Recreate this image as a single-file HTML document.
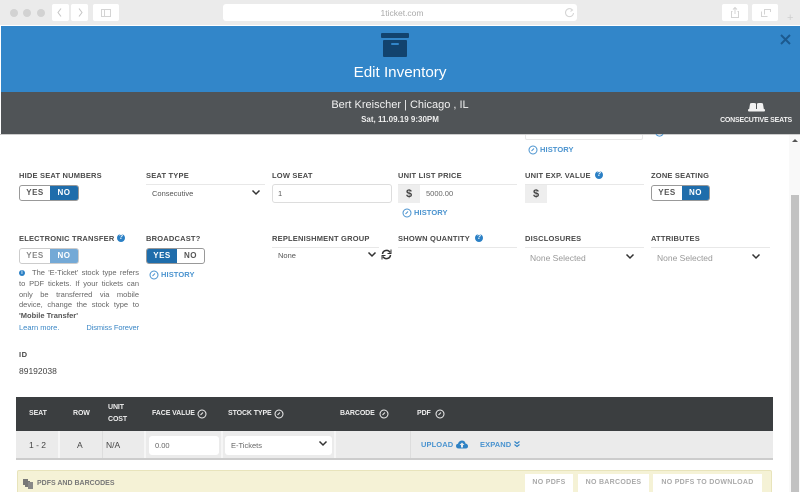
<!DOCTYPE html>
<html><head><meta charset="utf-8">
<style>
html,body{margin:0;padding:0;background:#fff;}
#p{position:relative;width:800px;height:492px;overflow:hidden;background:#fff;font-family:"Liberation Sans",sans-serif;color:#444;}
#p div,#p svg{position:absolute;}
.t{white-space:nowrap;}
.lb{font-size:7.5px;font-weight:bold;letter-spacing:.2px;color:#4a4a4a;white-space:nowrap;line-height:10px;}
.ln{height:1px;background:#e8e8e8;}
.bt{background:#fff;border-radius:2px;}
.q{width:8px;height:8px;border-radius:50%;background:#2b80c5;color:#fff;font-size:7px;font-weight:bold;line-height:8px;text-align:center;}
.tog{height:16px;border:1px solid #999;border-radius:3px;box-sizing:border-box;background:#fff;overflow:hidden;font-size:8px;font-weight:bold;letter-spacing:.5px;line-height:14px;text-align:center;color:#555;}
.tog .on{background:#1f6dab;color:#fff;top:0;height:14px;}
.tog .off{top:0;height:14px;}
.h{font-size:7.5px;font-weight:bold;letter-spacing:.1px;color:#4a93cf;white-space:nowrap;line-height:10px;}
.th{font-size:7px;font-weight:bold;letter-spacing:-.1px;color:#eee;white-space:nowrap;line-height:11px;}
.sel{font-size:7.5px;color:#555;white-space:nowrap;line-height:10px;}
.g{font-size:8.5px;color:#999;white-space:nowrap;line-height:10px;}
.np{background:#fff;font-size:7px;font-weight:bold;letter-spacing:.3px;color:#aaa;text-align:center;line-height:17px;white-space:nowrap;}
.j{left:19px;width:120px;font-size:7.5px;line-height:10.8px;color:#666;text-align:justify;text-align-last:justify;white-space:normal;}
</style></head><body>
<div id="p">
<!-- browser bar -->
<div style="left:0;top:0;width:800px;height:25px;background:#ebebeb"></div>
<div style="left:0;top:25px;width:800px;height:1px;background:#fff"></div>
<div style="left:10px;top:9px;width:8px;height:8px;border-radius:50%;background:#d2d2d2"></div>
<div style="left:23px;top:9px;width:8px;height:8px;border-radius:50%;background:#d2d2d2"></div>
<div style="left:37px;top:9px;width:8px;height:8px;border-radius:50%;background:#d2d2d2"></div>
<div class="bt" style="left:52px;top:4px;width:17px;height:17px"></div>
<div class="bt" style="left:71px;top:4px;width:17px;height:17px"></div>
<svg style="left:52px;top:4px" width="36" height="17" fill="none" stroke="#c4c4c4" stroke-width="1"><path d="M9 4.5L6 8.5L9 12.5M27 4.5L30 8.5L27 12.5"/></svg>
<div class="bt" style="left:93px;top:4px;width:26px;height:17px"></div>
<svg style="left:93px;top:4px" width="26" height="17" fill="none" stroke="#d4d4d4" stroke-width="1"><path d="M8.500 5.500H17.500V12.500H8.500ZM11.500 5.500V12.500"/></svg>
<div class="bt" style="left:223px;top:4px;width:354px;height:17px;border-radius:3px"></div>
<div class="t" style="left:380px;top:8px;width:44px;text-align:center;font-size:8.500px;line-height:10px;color:#aaa">1ticket.com</div>
<svg style="left:563px;top:6px" width="13" height="13" fill="none" stroke="#d4d4d4" stroke-width="1"><path d="M9.500 4A4 4 0 1 0 10.500 7M7 2.500L9.500 4L7.500 5.500"/></svg>
<div class="bt" style="left:722px;top:4px;width:26px;height:17px"></div>
<div class="bt" style="left:752px;top:4px;width:26px;height:17px"></div>
<svg style="left:722px;top:4px" width="56" height="17" fill="none" stroke="#d4d4d4" stroke-width="1"><path d="M10.500 7.500H9.500V13.500H16.500V7.500H15.500M13 10V3.500M11 5.500L13 3.500L15 5.500"/><path d="M39.500 7.500V12.500H45.500M42.500 10.500V5.500H48.500V8"/></svg>
<div class="t" style="left:787px;top:12px;font-size:11px;line-height:12px;color:#d0d0d0">+</div>
<!-- blue header -->
<div style="left:1px;top:26px;width:799px;height:66px;background:#3286c9"></div>
<svg style="left:380px;top:33px" width="30" height="25"><rect x="1" y="0" width="28" height="5" rx="1" fill="#12436e"/><rect x="3" y="7" width="24" height="17" rx="1" fill="#12436e"/><rect x="11" y="10" width="8" height="2" rx="1" fill="#3286c9"/></svg>
<div class="t" style="left:300px;top:64px;width:200px;text-align:center;font-size:15.200px;line-height:18px;color:#fff">Edit Inventory</div>
<svg style="left:779px;top:33px" width="13" height="13" stroke="#1c5a8f" stroke-width="2" fill="none"><path d="M2 2L11 11M11 2L2 11"/></svg>
<!-- dark band -->
<div style="left:1px;top:92px;width:799px;height:42px;background:#505457"></div>
<div style="left:0;top:134px;width:800px;height:1px;background:#ccc"></div>
<div class="t" style="left:300px;top:98px;width:200px;text-align:center;font-size:11px;line-height:14px;color:#f2f2f2">Bert Kreischer | Chicago , IL</div>
<div class="t" style="left:300px;top:115px;width:200px;text-align:center;font-size:8px;font-weight:bold;line-height:10px;color:#eee">Sat, 11.09.19 9:30PM</div>
<svg style="left:748px;top:102px" width="17" height="10" fill="#f2f2f2"><path d="M1 8L2 2Q2 1 4 1H6Q8 1 8 2V8Z"/><path d="M9 8V2Q9 1 11 1H13Q15 1 15 2L16 8Z"/><rect x="0" y="7" width="17" height="2.500" rx="1"/></svg>
<div class="t" style="left:700px;top:116px;width:92px;text-align:right;font-size:7px;font-weight:bold;letter-spacing:-.2px;line-height:9px;color:#f2f2f2">CONSECUTIVE SEATS</div>
<!-- scrollbar -->
<div style="left:789px;top:135px;width:11px;height:357px;background:#f9f9f9"></div>
<div style="left:791px;top:195px;width:8px;height:297px;background:#c2c2c2"></div>
<svg style="left:791px;top:138px" width="8" height="6"><path d="M1 4L4 1L7 4Z" fill="#555"/></svg>
<!-- cut off row -->
<div style="left:525px;top:135px;width:118px;height:5px;border:1px solid #e8e8e8;border-top:0;border-radius:0 0 2px 2px;box-sizing:border-box"></div>
<svg style="left:655px;top:134px" width="10" height="4" fill="none" stroke="#4a93cf" stroke-width="1"><path d="M1 0A4 4 0 0 0 8 0"/></svg>
<svg style="left:528px;top:145px" width="10" height="10" fill="none" stroke="#4a93cf" stroke-width="1"><circle cx="5" cy="5" r="4"/><path d="M3.500 6L6 3.500"/></svg>
<div class="h" style="left:540px;top:145px">HISTORY</div>
<!-- row 1 -->
<div class="lb" style="left:19px;top:171px">HIDE SEAT NUMBERS</div>
<div class="tog" style="left:19px;top:185px;width:60px"><div class="off" style="left:0;width:30px">YES</div><div class="on" style="left:30px;width:28px">NO</div></div>
<div class="lb" style="left:146px;top:171px">SEAT TYPE</div>
<div class="ln" style="left:146px;top:184px;width:119px"></div>
<div class="sel" style="left:152px;top:189px">Consecutive</div>
<svg style="left:251px;top:189px" width="10" height="8" fill="none" stroke="#333" stroke-width="1.500"><path d="M1.500 1.500L5 5L8.500 1.500"/></svg>
<div class="lb" style="left:272px;top:171px">LOW SEAT</div>
<div style="left:272px;top:184px;width:120px;height:19px;border:1px solid #ddd;border-radius:3px;box-sizing:border-box"></div>
<div class="sel" style="left:278px;top:189px">1</div>
<div class="lb" style="left:398px;top:171px">UNIT LIST PRICE</div>
<div class="ln" style="left:398px;top:184px;width:119px"></div>
<div style="left:398px;top:185px;width:22px;height:18px;background:#eee"></div>
<div class="t" style="left:398px;top:187px;width:22px;text-align:center;font-size:11px;font-weight:bold;line-height:14px;color:#444">$</div>
<div class="sel" style="left:426px;top:189px;color:#666">5000.00</div>
<svg style="left:402px;top:208px" width="10" height="10" fill="none" stroke="#4a93cf" stroke-width="1"><circle cx="5" cy="5" r="4"/><path d="M3.500 6L6 3.500"/></svg>
<div class="h" style="left:414px;top:208px">HISTORY</div>
<div class="lb" style="left:525px;top:171px">UNIT EXP. VALUE</div>
<div class="q" style="left:595px;top:171px">?</div>
<div class="ln" style="left:525px;top:184px;width:119px"></div>
<div style="left:525px;top:185px;width:22px;height:18px;background:#eee"></div>
<div class="t" style="left:525px;top:187px;width:22px;text-align:center;font-size:11px;font-weight:bold;line-height:14px;color:#444">$</div>
<div class="lb" style="left:651px;top:171px">ZONE SEATING</div>
<div class="tog" style="left:651px;top:185px;width:59px"><div class="off" style="left:0;width:30px">YES</div><div class="on" style="left:30px;width:27px">NO</div></div>
<!-- row 2 -->
<div class="lb" style="left:19px;top:234px">ELECTRONIC TRANSFER</div>
<div class="q" style="left:117px;top:234px">?</div>
<div class="tog" style="left:19px;top:248px;width:60px;border-color:#ccc;color:#888"><div class="off" style="left:0;width:30px">YES</div><div class="on" style="left:30px;width:28px;background:#74a9d6">NO</div></div>
<div class="q" style="left:19px;top:270px;width:6px;height:6px;font-size:5px;line-height:6px">i</div>
<div class="j" style="top:268px;left:32px;width:107px">The 'E-Ticket' stock type refers</div>
<div class="j" style="top:279px">to PDF tickets. If your tickets can</div>
<div class="j" style="top:290px">only be transferred via mobile</div>
<div class="j" style="top:300px">device, change the stock type to</div>
<div class="t" style="left:19px;top:311px;font-size:7.500px;line-height:10.800px;font-weight:bold;color:#555">'Mobile Transfer'</div>
<div class="t" style="left:19px;top:323px;font-size:7.500px;line-height:10px;color:#3b87c6">Learn more.</div>
<div class="t" style="left:79px;top:323px;width:60px;text-align:right;font-size:7.500px;letter-spacing:-.1px;line-height:10px;color:#3b87c6">Dismiss Forever</div>
<div class="lb" style="left:146px;top:234px">BROADCAST?</div>
<div class="tog" style="left:146px;top:248px;width:59px"><div class="on" style="left:0;width:30px">YES</div><div class="off" style="left:30px;width:27px">NO</div></div>
<svg style="left:149px;top:270px" width="10" height="10" fill="none" stroke="#4a93cf" stroke-width="1"><circle cx="5" cy="5" r="4"/><path d="M3.500 6L6 3.500"/></svg>
<div class="h" style="left:161px;top:270px">HISTORY</div>
<div class="lb" style="left:272px;top:234px">REPLENISHMENT GROUP</div>
<div class="ln" style="left:272px;top:247px;width:107px"></div>
<div class="sel" style="left:278px;top:251px">None</div>
<svg style="left:367px;top:251px" width="10" height="8" fill="none" stroke="#333" stroke-width="1.500"><path d="M1.500 1.500L5 5L8.500 1.500"/></svg>
<svg style="left:381px;top:249px" width="11" height="11" fill="none" stroke="#333" stroke-width="1.500"><path d="M1.500 5A4 4 0 0 1 9 3.500M9.500 6A4 4 0 0 1 2 7.500"/><path d="M10 0.500V4.500H6.500M1 10.500V6.500H4.500" stroke-width="1"/></svg>
<div class="lb" style="left:398px;top:234px">SHOWN QUANTITY</div>
<div class="q" style="left:475px;top:234px">?</div>
<div class="ln" style="left:398px;top:247px;width:119px"></div>
<div class="lb" style="left:525px;top:234px">DISCLOSURES</div>
<div class="ln" style="left:525px;top:247px;width:119px"></div>
<div class="g" style="left:530px;top:253px">None Selected</div>
<svg style="left:625px;top:253px" width="10" height="8" fill="none" stroke="#333" stroke-width="1.500"><path d="M1.500 1.500L5 5L8.500 1.500"/></svg>
<div class="lb" style="left:651px;top:234px">ATTRIBUTES</div>
<div class="ln" style="left:651px;top:247px;width:119px"></div>
<div class="g" style="left:657px;top:253px">None Selected</div>
<svg style="left:751px;top:253px" width="10" height="8" fill="none" stroke="#333" stroke-width="1.500"><path d="M1.500 1.500L5 5L8.500 1.500"/></svg>
<!-- ID -->
<div class="lb" style="left:19px;top:350px;letter-spacing:.5px">ID</div>
<div class="t" style="left:19px;top:366px;font-size:8.500px;line-height:11px;color:#444">89192038</div>
<!-- table -->
<div style="left:16px;top:397px;width:757px;height:34px;background:#3b3e40"></div>
<div class="th" style="left:29px;top:408px">SEAT</div>
<div class="th" style="left:73px;top:408px">ROW</div>
<div class="th" style="left:108px;top:402px;line-height:12px">UNIT<br>COST</div>
<div class="th" style="left:152px;top:408px">FACE VALUE</div>
<div class="th" style="left:228px;top:408px">STOCK TYPE</div>
<div class="th" style="left:340px;top:408px">BARCODE</div>
<div class="th" style="left:417px;top:408px">PDF</div>
<svg style="left:197px;top:409px" width="10" height="10" fill="none" stroke="#eee" stroke-width="1"><circle cx="5" cy="5" r="4"/><path d="M3.500 6L6 3.500"/></svg>
<svg style="left:274px;top:409px" width="10" height="10" fill="none" stroke="#eee" stroke-width="1"><circle cx="5" cy="5" r="4"/><path d="M3.500 6L6 3.500"/></svg>
<svg style="left:379px;top:409px" width="10" height="10" fill="none" stroke="#eee" stroke-width="1"><circle cx="5" cy="5" r="4"/><path d="M3.500 6L6 3.500"/></svg>
<svg style="left:435px;top:409px" width="10" height="10" fill="none" stroke="#eee" stroke-width="1"><circle cx="5" cy="5" r="4"/><path d="M3.500 6L6 3.500"/></svg>
<div style="left:16px;top:431px;width:757px;height:28px;background:#ebebeb"></div>
<div style="left:16px;top:458px;width:757px;height:2px;background:#ccc"></div>
<div style="left:58px;top:431px;width:2px;height:27px;background:#f6f6f6"></div>
<div style="left:102px;top:431px;width:1px;height:27px;background:#ddd"></div>
<div style="left:144px;top:431px;width:2px;height:27px;background:#f6f6f6"></div>
<div style="left:221px;top:431px;width:2px;height:27px;background:#f6f6f6"></div>
<div style="left:334px;top:431px;width:2px;height:27px;background:#f6f6f6"></div>
<div style="left:410px;top:431px;width:1px;height:27px;background:#ddd"></div>
<div class="t" style="left:29px;top:440px;font-size:8.500px;line-height:10px;color:#444">1 - 2</div>
<div class="t" style="left:77px;top:440px;font-size:8.500px;line-height:10px;color:#444">A</div>
<div class="t" style="left:106px;top:440px;font-size:8.500px;line-height:10px;color:#444">N/A</div>
<div style="left:149px;top:436px;width:70px;height:19px;background:#fff;border-radius:3px"></div>
<div class="sel" style="left:155px;top:441px;color:#666">0.00</div>
<div style="left:225px;top:436px;width:107px;height:19px;background:#fff;border-radius:3px"></div>
<div class="sel" style="left:231px;top:441px;color:#666">E-Tickets</div>
<svg style="left:318px;top:440px" width="10" height="8" fill="none" stroke="#333" stroke-width="1.500"><path d="M1.500 1.500L5 5L8.500 1.500"/></svg>
<div class="h" style="left:421px;top:440px">UPLOAD</div>
<svg style="left:456px;top:440px" width="12" height="9"><path d="M3 8.500Q0 8.500 0 6Q0 4 2 3.800Q3 .5 6 .5Q9 .5 9.500 3.500Q12 4 12 6.300Q12 8.500 9.500 8.500Z" fill="#2f82c4"/><path d="M6 2.500L8.500 5H7V7.500H5V5H3.500Z" fill="#ebebeb"/></svg>
<div class="h" style="left:480px;top:440px">EXPAND</div>
<svg style="left:514px;top:441px" width="6" height="7" fill="none" stroke="#2f82c4" stroke-width="1.200"><path d="M.5 .5L3 2.500L5.500 .5M.5 3.500L3 5.500L5.500 3.500"/></svg>
<!-- yellow bar -->
<div style="left:17px;top:470px;width:755px;height:22px;background:#f5f2d6;border:1px solid #e8e4bb;border-bottom:0;box-sizing:border-box;border-radius:2px 2px 0 0"></div>
<svg style="left:23px;top:479px" width="10" height="10" fill="#777"><path d="M0 0H5V2H7V8H2V6H0Z"/><path d="M5 3H10V10H5Z" fill="#888"/></svg>
<div class="t" style="left:37px;top:479px;font-size:7px;font-weight:bold;line-height:10px;color:#777">PDFS AND BARCODES</div>
<div class="np" style="left:525px;top:474px;width:48px;height:18px">NO PDFS</div>
<div class="np" style="left:578px;top:474px;width:71px;height:18px">NO BARCODES</div>
<div class="np" style="left:653px;top:474px;width:109px;height:18px">NO PDFS TO DOWNLOAD</div>
</div>
</body></html>
